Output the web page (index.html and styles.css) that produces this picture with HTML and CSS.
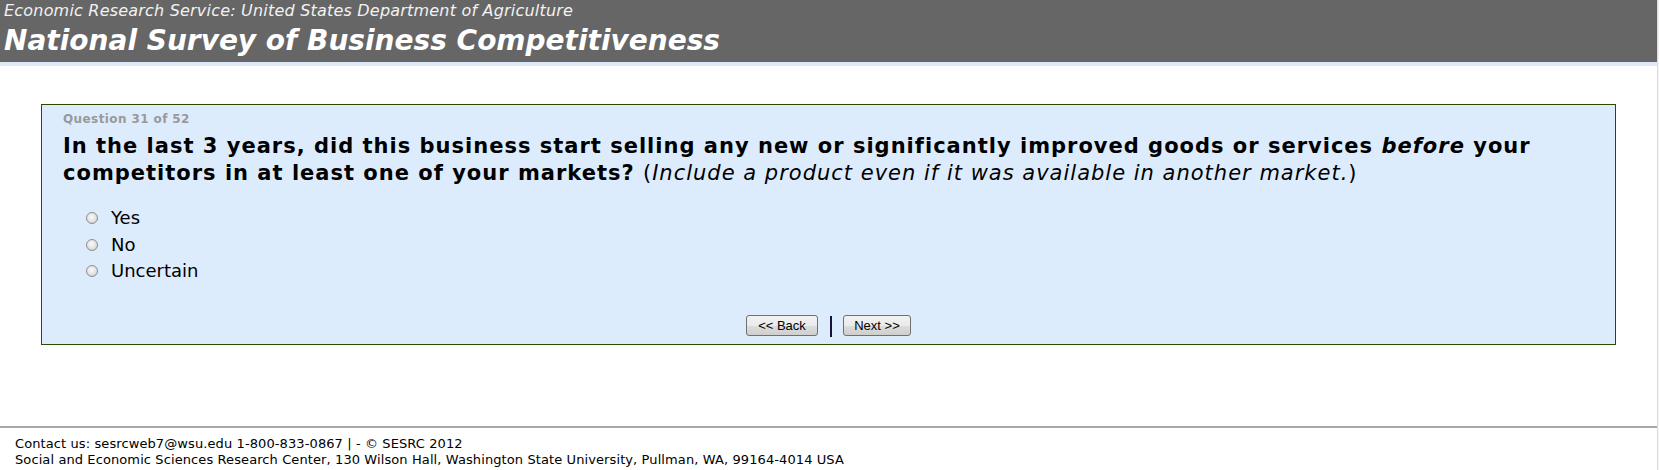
FILE: index.html
```html
<!DOCTYPE html>
<html lang="en">
<head>
<meta charset="utf-8">
<title>National Survey of Business Competitiveness</title>
<link rel="stylesheet" href="styles.css">
</head>
<body>
<div class="frame">
  <div class="page">
    <header class="masthead">
      <div class="agency">Economic Research Service: United States Department of Agriculture</div>
      <h1 class="title">National Survey of Business Competitiveness</h1>
    </header>
    <div class="band"></div>
    <main class="content">
      <form class="question-box">
        <div class="counter">Question 31 of 52</div>
        <h2 class="question">In the last 3 years, did this business start selling any new or significantly improved goods or services <em>before</em> your competitors in at least one of your markets? <span class="note">(<i>Include a product even if it was available in another market.</i>)</span></h2>
        <div class="options">
          <label class="option"><input type="radio" name="q31" class="radio"><span>Yes</span></label>
          <label class="option"><input type="radio" name="q31" class="radio"><span>No</span></label>
          <label class="option"><input type="radio" name="q31" class="radio"><span>Uncertain</span></label>
        </div>
        <div class="nav">
          <button type="button" class="btn btn-back">&lt;&lt; Back</button>
          <span class="sep"></span>
          <button type="button" class="btn btn-next">Next &gt;&gt;</button>
        </div>
      </form>
    </main>
    <footer class="footer">
      <div>Contact us: sesrcweb7@wsu.edu 1-800-833-0867 | - © SESRC 2012</div>
      <div>Social and Economic Sciences Research Center, 130 Wilson Hall, Washington State University, Pullman, WA, 99164-4014 USA</div>
    </footer>
  </div>
  <div class="scroll-edge"></div>
</div>
</body>
</html>
```

FILE: styles.css
```css
html, body {
  margin: 0;
  padding: 0;
  background: #ffffff;
}

body {
  font-family: "DejaVu Sans", Verdana, sans-serif;
  color: #000;
  overflow: hidden;
}

.frame {
  display: flex;
  height: 470px;
}

.page {
  flex: 1;
  min-width: 0;
}

.scroll-edge {
  width: 2px;
  background: #f4f4f4;
  border-left: 1px solid #dcdcdc;
  box-sizing: border-box;
}

.masthead {
  background: #666666;
  height: 62px;
  box-sizing: border-box;
  padding: 1px 0 0 4px;
  color: #ffffff;
}

.agency {
  font-style: italic;
  font-size: 16px;
  line-height: 20px;
  letter-spacing: 0.2px;
  color: #f2f2f2;
}

.title {
  margin: 3px 0 0;
  font-size: 28px;
  line-height: 34px;
  font-weight: bold;
  font-style: italic;
}

.band {
  height: 4px;
  background: #dde9f8;
}

.content {
  padding: 38px 41px 0;
}

.question-box {
  margin: 0;
  background: #ddecfd;
  border: 1px solid #2f4a00;
  height: 241px;
  box-sizing: border-box;
  padding: 7px 21px 0;
  display: flex;
  flex-direction: column;
}

.counter {
  font-size: 12px;
  line-height: 14px;
  font-weight: bold;
  letter-spacing: 0.4px;
  color: #999999;
}

.question {
  margin: 7px 0 0;
  font-size: 21px;
  line-height: 27px;
  font-weight: bold;
  letter-spacing: 1px;
}

.question em {
  font-style: italic;
}

.note {
  font-weight: normal;
}

.options {
  margin-top: 17px;
  display: flex;
  flex-direction: column;
}

.option {
  display: flex;
  align-items: center;
  height: 26.7px;
  font-size: 18px;
  padding-left: 23px;
}

.radio {
  appearance: none;
  -webkit-appearance: none;
  width: 12px;
  height: 12px;
  margin: 1px 13px 0 0;
  border-radius: 50%;
  border: 1px solid #8e8e8e;
  background: radial-gradient(circle at 45% 40%, #fafafa 0%, #e4e4e4 50%, #c4c4c4 100%);
  box-sizing: border-box;
}

.nav {
  margin-top: auto;
  margin-bottom: 7px;
  display: flex;
  justify-content: center;
  align-items: center;
}

.btn {
  font-family: "Liberation Sans", Arial, sans-serif;
  font-size: 13px;
  height: 21px;
  padding: 0;
  color: #000;
  border: 1px solid #707070;
  border-radius: 3px;
  background: linear-gradient(#f2f2f2 0%, #ebebeb 50%, #dddddd 51%, #cfcfcf 100%);
  box-sizing: border-box;
}

.btn-back {
  width: 72px;
}

.btn-next {
  width: 68px;
}

.sep {
  width: 2px;
  height: 21px;
  background: #14143a;
  margin: 2px 11px 0 12px;
}

.footer {
  margin-top: 81px;
  border-top: 2px solid #a8a8a8;
  padding: 8px 0 0 15px;
  font-size: 13px;
  line-height: 16px;
  letter-spacing: 0.1px;
}
```
